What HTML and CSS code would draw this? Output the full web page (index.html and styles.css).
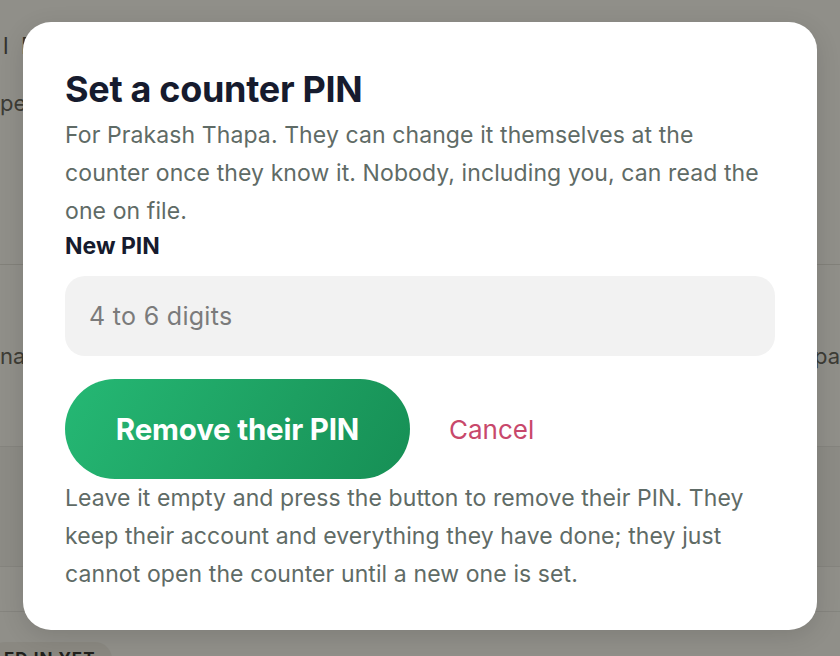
FILE: index.html
```html
<!DOCTYPE html>
<html lang="en">
<head>
<meta charset="utf-8">
<title>Set a counter PIN</title>
<link rel="stylesheet" href="styles.css">
</head>
<body>
<div class="page">
  <div class="bg-row bg-head"><span class="bg-text bg-h">l PINs</span></div>
  <div class="bg-row bg-sub"><span class="bg-text">people</span></div>
  <div class="bg-row bg-spacer"></div>
  <div class="bg-row bg-person">
    <span class="bg-text">name</span>
    <span class="bg-text">pa</span>
  </div>
  <div class="bg-row bg-band"></div>
  <div class="bg-row bg-thin"></div>
  <div class="bg-row bg-thin2"></div>
  <div class="bg-row bg-foot"><span class="bg-pill">ED IN YET</span></div>
</div>

<div class="overlay">
  <div class="modal" role="dialog" aria-labelledby="pin-title">
    <h2 id="pin-title" class="modal-title">Set a counter PIN</h2>
    <p class="modal-text">For Prakash Thapa. They can change it themselves at the counter once they know it. Nobody, including you, can read the one on file.</p>
    <label class="field-label" for="pin">New PIN</label>
    <input id="pin" class="field-input" type="text" placeholder="4 to 6 digits">
    <div class="actions">
      <button class="btn-primary" type="button">Remove their PIN</button>
      <button class="btn-cancel" type="button">Cancel</button>
    </div>
    <p class="modal-text">Leave it empty and press the button to remove their PIN. They keep their account and everything they have done; they just cannot open the counter until a new one is set.</p>
  </div>
</div>
</body>
</html>
```

FILE: styles.css
```css
* { box-sizing: border-box; }

html, body {
  margin: 0;
  padding: 0;
  height: 100%;
}

body {
  width: 840px;
  height: 656px;
  overflow: hidden;
  background: #f7f7f4;
  font-family: Inter, "Liberation Sans", sans-serif;
  color: #161b2e;
  position: relative;
}

/* ---------- background page ---------- */
.page {
  display: flex;
  flex-direction: column;
  width: 840px;
}

.bg-row {
  display: flex;
  align-items: center;
  border-bottom: 1px solid #e4e4df;
}

.bg-text {
  font-size: 22px;
  color: #5e5e5a;
  white-space: nowrap;
}

.bg-h { font-size: 23px; letter-spacing: 3px; color: #4e4e4b; margin-left: 3px; }

.bg-head { height: 96px; padding-bottom: 4px; border-bottom: none; }
.bg-sub { height: 40px; padding-bottom: 26px; border-bottom: none; }
.bg-spacer { height: 129px; border-bottom-color: #deded8; }
.bg-person { height: 182px; justify-content: space-between; }
.bg-band { height: 120px; background: #f0f0ec; }
.bg-thin { height: 45px; }
.bg-thin2 { height: 24px; border-bottom: none; }
.bg-foot { height: 40px; border-bottom: none; align-items: flex-start; }
.bg-pill {
  margin-left: -12px;
  margin-top: 6px;
  padding: 7px 16px;
  border-radius: 20px;
  background: #ecebe6;
  font-size: 17px;
  font-weight: 700;
  letter-spacing: 1px;
  color: #2b2b2b;
}

/* ---------- overlay + modal ---------- */
.overlay {
  position: absolute;
  inset: 0;
  background: rgba(22, 20, 10, 0.46);
  display: flex;
  justify-content: center;
  align-items: flex-start;
  padding-top: 22px;
}

.modal {
  width: 794px;
  height: 608px;
  background: #ffffff;
  border-radius: 28px;
  padding: 47px 42px 40px;
  display: flex;
  flex-direction: column;
  box-shadow: 0 6px 24px rgba(0, 0, 0, 0.12);
}

.modal-title {
  margin: 0;
  font-size: 36px;
  line-height: 40px;
  font-weight: 700;
  letter-spacing: -0.3px;
  color: #161b2e;
}

.modal-text {
  margin: 0;
  max-width: 700px;
  font-size: 23px;
  line-height: 38px;
  letter-spacing: 0.1px;
  color: #5f6b66;
}

.modal-title + .modal-text { margin-top: 7px; }

.field-label {
  font-size: 23px;
  line-height: 30px;
  font-weight: 700;
  color: #161b2e;
  margin-top: 1px;
}

.field-input {
  margin-top: 15px;
  height: 80px;
  width: 100%;
  flex: 0 0 80px;
  border: none;
  border-radius: 20px;
  background: #f2f2f2;
  padding: 0 24px;
  font-family: inherit;
  font-size: 25px;
  letter-spacing: 0.3px;
  color: #161b2e;
  outline: none;
}

.field-input::placeholder { color: #7b7b7b; }

.actions {
  display: flex;
  align-items: center;
  gap: 39px;
  margin-top: 23px;
}

.btn-primary {
  width: 345px;
  height: 100px;
  border: none;
  border-radius: 50px;
  background: linear-gradient(120deg, #25b874 0%, #1d9f61 60%, #168f55 100%);
  color: #ffffff;
  font-family: inherit;
  font-size: 29.5px;
  font-weight: 700;
  letter-spacing: -0.2px;
  cursor: pointer;
}

.btn-cancel {
  border: none;
  background: none;
  padding: 0;
  font-family: inherit;
  font-size: 26px;
  color: #c8486b;
  cursor: pointer;
}
```
